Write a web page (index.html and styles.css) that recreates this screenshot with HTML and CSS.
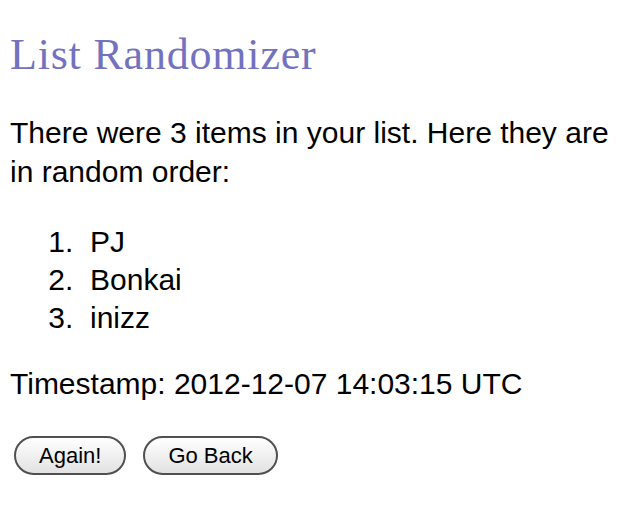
FILE: index.html
```html
<!DOCTYPE html>
<html lang="en">
<head>
    <meta charset="UTF-8">
    <meta name="viewport" content="width=device-width, initial-scale=1.0">
    <title>List Randomizer</title>
    <link rel="stylesheet" href="styles.css">
</head>
<body>
    <h1>List Randomizer</h1>
    <p class="intro">There were 3 items in your list. Here they are in random order:</p>
    <ol class="items">
        <li>PJ</li>
        <li>Bonkai</li>
        <li>inizz</li>
    </ol>
    <p class="stamp">Timestamp: 2012-12-07 14:03:15 UTC</p>
    <div class="actions">
        <button type="button">Again!</button>
        <button type="button">Go Back</button>
    </div>
</body>
</html>
```

FILE: styles.css
```css
body {
    margin: 0;
    padding: 0 10px;
    background: #fff;
    color: #000;
    font-family: "Liberation Sans", Arial, sans-serif;
    font-size: 30px;
    line-height: 39px;
}
h1 {
    font-family: "Liberation Serif", "Times New Roman", serif;
    font-weight: normal;
    font-size: 44px;
    letter-spacing: 0.8px;
    line-height: 48px;
    color: #7272bf;
    margin: 31px 0 34px;
}
p {
    margin: 0;
}
.intro {
    margin-bottom: 32px;
}
.items {
    margin: 0 0 27px;
    padding-left: 80px;
    line-height: 38px;
}
.items li::marker {
    content: counter(list-item) ".\00a0\00a0";
}
.stamp {
    margin-bottom: 33px;
}
.actions {
    display: flex;
    gap: 17px;
    padding-left: 4px;
}
button {
    font-family: "Liberation Sans", Arial, sans-serif;
    font-size: 22px;
    height: 39px;
    padding: 0 23px;
    border: 2px solid #505050;
    border-radius: 20px;
    background: linear-gradient(#ffffff, #e2e2e2);
    color: #000;
}
```
